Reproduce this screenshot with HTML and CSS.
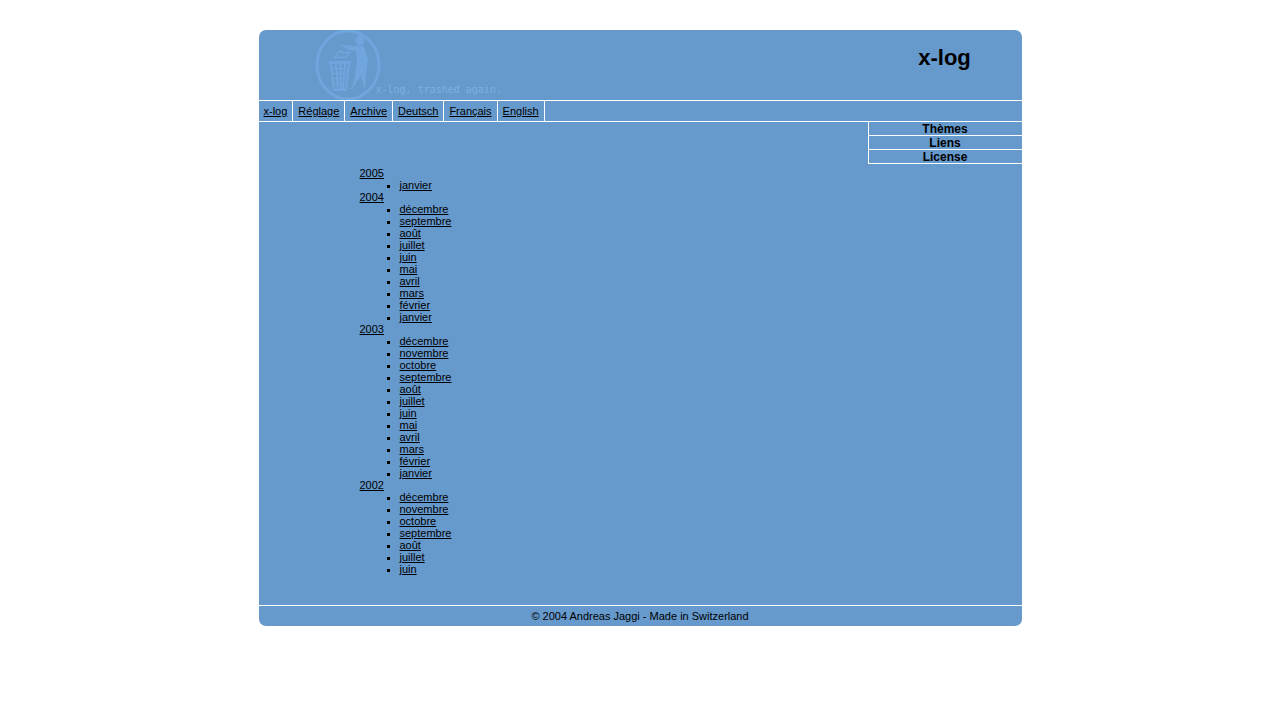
FILE: index.html
```
<!DOCTYPE html>
<html lang="fr">
<head>
<meta charset="utf-8">
<title>x-log</title>
<link rel="stylesheet" href="styles.css">
</head>
<body>
<div class="page">
  <header class="header">
    <div class="brand">
      <svg class="logo" viewBox="0 0 70 70" aria-hidden="true">
        <ellipse cx="34" cy="35" rx="31" ry="34" fill="none" stroke="#70a6dd" stroke-width="3"/>
        <g fill="#70a6dd">
          <ellipse cx="46" cy="10.500" rx="4.500" ry="5"/>
          <path d="M26 15 L42 16 Q50 15 51 19 L54 30 L43 31 L42 21 L35 20 Z"/>
          <path d="M43 31 L54 30 L52 45 L51 60 L47 46 L37 60 L41 46 Z"/>
        </g>
        <g fill="none" stroke="#70a6dd">
          <path stroke-width="1.500" d="M20 28 L26 21 L30 23 L36 22 L31 28 L26 27 Z"/>
          <path stroke-width="3" d="M15 32.500 H37"/>
          <path stroke-width="2" d="M17 34 L20 60 H32 L35 34 M22 34 L24 60 M26.500 34 L27 60 M31 34 L29 60"/>
          <path stroke-width="1" d="M17 38.500 H35 M18 43.500 H34 M18 48.500 H34 M19 53.500 H33"/>
        </g>
      </svg>
      <span class="tagline">x-log, trashed again.</span>
    </div>
    <h1 class="title">x-log</h1>
  </header>
  <nav class="nav">
    <a href="#">x-log</a><a href="#">Réglage</a><a href="#">Archive</a><a href="#">Deutsch</a><a href="#">Français</a><a href="#">English</a>
  </nav>
  <div class="body">
    <main class="archive">
      <a href="#">2005</a>
      <ul>
        <li><a href="#">janvier</a></li>
      </ul>
      <a href="#">2004</a>
      <ul>
        <li><a href="#">décembre</a></li>
        <li><a href="#">septembre</a></li>
        <li><a href="#">août</a></li>
        <li><a href="#">juillet</a></li>
        <li><a href="#">juin</a></li>
        <li><a href="#">mai</a></li>
        <li><a href="#">avril</a></li>
        <li><a href="#">mars</a></li>
        <li><a href="#">février</a></li>
        <li><a href="#">janvier</a></li>
      </ul>
      <a href="#">2003</a>
      <ul>
        <li><a href="#">décembre</a></li>
        <li><a href="#">novembre</a></li>
        <li><a href="#">octobre</a></li>
        <li><a href="#">septembre</a></li>
        <li><a href="#">août</a></li>
        <li><a href="#">juillet</a></li>
        <li><a href="#">juin</a></li>
        <li><a href="#">mai</a></li>
        <li><a href="#">avril</a></li>
        <li><a href="#">mars</a></li>
        <li><a href="#">février</a></li>
        <li><a href="#">janvier</a></li>
      </ul>
      <a href="#">2002</a>
      <ul>
        <li><a href="#">décembre</a></li>
        <li><a href="#">novembre</a></li>
        <li><a href="#">octobre</a></li>
        <li><a href="#">septembre</a></li>
        <li><a href="#">août</a></li>
        <li><a href="#">juillet</a></li>
        <li><a href="#">juin</a></li>
      </ul>
    </main>
    <aside class="side">
      <h2>Thèmes</h2>
      <h2>Liens</h2>
      <h2>License</h2>
    </aside>
  </div>
  <footer class="footer">© 2004 Andreas Jaggi - Made in Switzerland</footer>
</div>
</body>
</html>
```
FILE: styles.css
```
body {
  margin: 0;
  padding: 30px 16px;
  background: #fff;
  color: #000;
  font: 11px/12px "Liberation Sans", Arial, sans-serif;
}
a { color: #000; }
.page {
  max-width: 763px;
  margin: 0 auto;
  background: #69c;
  border-radius: 7px;
  overflow: hidden;
}
.header {
  display: flex;
  justify-content: space-between;
  min-height: 70px;
}
.brand {
  display: flex;
  align-items: flex-end;
  padding-left: 55px;
}
.logo { width: 70px; height: 70px; }
.tagline {
  margin-left: -8px;
  padding-bottom: 3px;
  color: #7db0e4;
  font: 10px/14px "DejaVu Sans Mono", monospace;
}
.title {
  width: 154px;
  margin: 0;
  padding-top: 15px;
  font-size: 22px;
  line-height: 26px;
  text-align: center;
}
.nav {
  display: flex;
  flex-wrap: wrap;
  border-top: 1px solid #fff;
  border-bottom: 1px solid #fff;
}
.nav a {
  padding: 4px 5px;
  border-right: 1px solid #fff;
}
.body {
  display: flex;
  justify-content: space-between;
  align-items: flex-start;
}
.archive { padding: 45px 0 30px 101px; }
.archive ul {
  margin: 0;
  padding-left: 40px;
  list-style: square;
}
.side {
  width: 153px;
  border-left: 1px solid #fff;
}
.side h2 {
  margin: 0;
  padding-top: 1px;
  border-bottom: 1px solid #fff;
  font-size: 12px;
  line-height: 12px;
  text-align: center;
}
.footer {
  padding: 4px;
  border-top: 1px solid #fff;
  text-align: center;
}
```
